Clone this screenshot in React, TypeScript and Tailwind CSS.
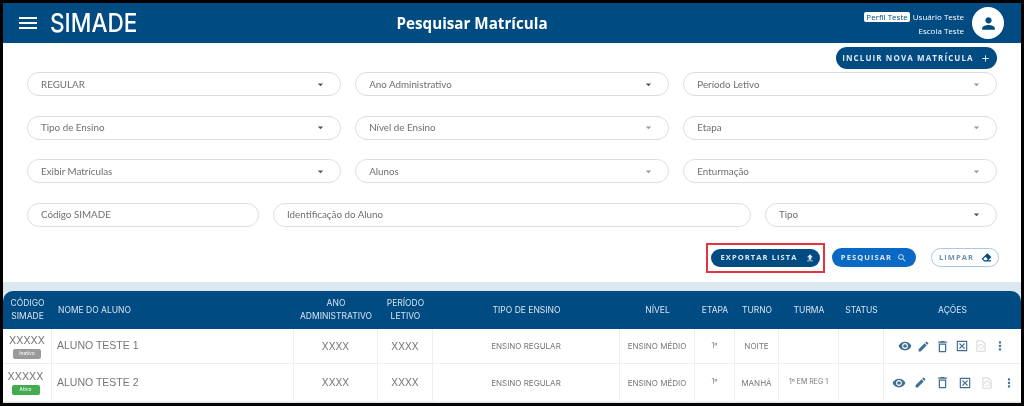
import { FaEraser } from "react-icons/fa"
import {
  MdAdd,
  MdArrowDropDown,
  MdEdit,
  MdFileUpload,
  MdMenu,
  MdMoreVert,
  MdOutlineDelete,
  MdOutlineDisabledByDefault,
  MdOutlineRestorePage,
  MdPerson,
  MdSearch,
  MdVisibility,
} from "react-icons/md"

const gridCols =
  "grid grid-cols-[49px_242px_84px_55px_187px_75px_40px_44px_60px_45px_137px]"

const Select = ({ label, dark, className = "" }: { label: string; dark?: boolean; className?: string }) => (
  <div className={`flex h-6 items-center justify-between rounded-full border border-[#dedede] pl-[13px] pr-[13px] ${className}`}>
    <span className="text-[9.8px] text-[#6f6f6f]">{label}</span>
    <MdArrowDropDown size={13} className={dark ? "text-[#555]" : "text-[#999]"} />
  </div>
)

const Input = ({ label, className = "" }: { label: string; className?: string }) => (
  <div className={`flex h-6 items-center rounded-full border border-[#dedede] px-[13px] ${className}`}>
    <span className="text-[9.8px] text-[#6f6f6f]">{label}</span>
  </div>
)

const headers = [
  "CÓDIGO SIMADE",
  "NOME DO ALUNO",
  "ANO ADMINISTRATIVO",
  "PERÍODO LETIVO",
  "TIPO DE ENSINO",
  "NÍVEL",
  "ETAPA",
  "TURNO",
  "TURMA",
  "STATUS",
  "AÇÕES",
]

const Cell = ({ children, className = "" }: { children?: React.ReactNode; className?: string }) => (
  <div className={`flex items-center justify-center border-r border-[#efefef] text-[#777] ${className}`}>
    {children}
  </div>
)

type Row = {
  name: string
  badge: string
  badgeColor: string
  turno: string
  turma: string
  gap: string
  height: string
  codeShift: string
}

const rows: Row[] = [
  { name: "ALUNO TESTE 1", badge: "Inativo", badgeColor: "bg-[#9a9a9a]", turno: "NOITE", turma: "", gap: "gap-[5px] pr-[1px]", height: "h-[35px]", codeShift: "" },
  { name: "ALUNO TESTE 2", badge: "Ativo", badgeColor: "bg-[#45ab4f]", turno: "MANHÃ", turma: "1º EM REG 1", gap: "gap-[8px] pl-[3px]", height: "h-[38px]", codeShift: "pr-[3px]" },
]

export default function App() {
  return (
    <div className="h-[406px] w-[1024px] overflow-hidden bg-black p-[3px] font-['Lato',sans-serif]">
      <div className="flex h-[400px] w-[1018px] flex-col bg-white blur-[0.6px]">
        {/* Header */}
        <header className="flex h-10 shrink-0 items-center bg-[#004b82] pl-[13px] pr-[17px] text-white">
          <MdMenu size={24} />
          <span className="ml-[10px] origin-left scale-x-[0.87] font-['Inter',sans-serif] text-[26px] font-medium leading-none">SIMADE</span>
          <h1 className="ml-[246px] font-['Open_Sans',sans-serif] text-[15.2px] font-bold">Pesquisar Matrícula</h1>
          <div className="ml-auto flex flex-col items-end gap-[5px] font-['Open_Sans',sans-serif] text-[8px] leading-none">
            <div className="flex items-center gap-[3px]">
              <span className="rounded-[2px] bg-white px-[2px] py-[1px] text-[#004b82]">Perfil Teste</span>
              <span>Usuário Teste</span>
            </div>
            <span>Escola Teste</span>
          </div>
          <div className="ml-2 flex size-8 items-center justify-center rounded-full bg-white text-[#004b82]">
            <MdPerson size={19} />
          </div>
        </header>

        {/* Filters */}
        <div className="flex justify-end pr-[24px] pt-[4px]">
          <button className="flex h-[22px] w-[161px] items-center justify-center gap-[6px] rounded-full bg-[#004b82] font-['Open_Sans',sans-serif] text-[8px] font-bold tracking-[1.1px] text-[#dfe9f1]">
            INCLUIR NOVA MATRÍCULA
            <MdAdd size={11} />
          </button>
        </div>
        <div className="mt-[3px] flex flex-col gap-[19.5px] pl-[24px] pr-[24px]">
          <div className="grid grid-cols-3 gap-[14.5px]">
            <Select label="REGULAR" dark />
            <Select label="Ano Administrativo" dark />
            <Select label="Período Letivo" />
          </div>
          <div className="grid grid-cols-3 gap-[14.5px]">
            <Select label="Tipo de Ensino" dark />
            <Select label="Nível de Ensino" />
            <Select label="Etapa" />
          </div>
          <div className="grid grid-cols-3 gap-[14.5px]">
            <Select label="Exibir Matrículas" dark />
            <Select label="Alunos" />
            <Select label="Enturmação" />
          </div>
          <div className="grid grid-cols-[232px_1fr_232px] gap-[14px]">
            <Input label="Código SIMADE" />
            <Input label="Identificação do Aluno" />
            <Select label="Tipo" dark />
          </div>
        </div>

        {/* Actions */}
        <div className="mt-[16px] flex items-center justify-end pr-[22px] font-['Open_Sans',sans-serif] text-[7.5px] font-bold tracking-[1.1px]">
          <div className="border-2 border-[#e8333c] px-[3px] py-[4px]">
            <button className="flex h-[18px] w-[109px] items-center justify-center gap-[7px] rounded-full bg-[#004b82] pl-[4px] text-[#dfe9f1]">
              EXPORTAR LISTA
              <MdFileUpload size={10} />
            </button>
          </div>
          <button className="ml-[7px] flex h-[19px] w-[84px] items-center justify-center gap-[5px] rounded-full bg-[#0a69c4] text-[#dfe9f1]">
            PESQUISAR
            <MdSearch size={10} />
          </button>
          <button className="ml-[15px] flex h-[19px] w-[68px] items-center justify-center gap-[8px] rounded-full border border-[#a9c6e4] text-[#6f8fb0]">
            LIMPAR
            <FaEraser size={9} className="text-[#004b82]" />
          </button>
        </div>

        {/* Table */}
        <div className="mt-[9.5px] flex-1 bg-[#dde7f0] pt-[9px]">
          <div className="overflow-hidden rounded-t-[10px]">
            <div className={`${gridCols} h-[38px] items-center bg-[#004b82] text-center font-['Inter',sans-serif] text-[8.5px] leading-[13px] text-[#d6e3ee]`}>
              {headers.map((h, i) => (
                <div key={h} className={i === 1 ? "pl-[6px] text-left" : ""}>
                  {h}
                </div>
              ))}
            </div>
          </div>
          <div className="bg-white">
            {rows.map((r) => (
              <div key={r.name} className={`${gridCols} ${r.height} border-b border-[#efefef] font-['Inter',sans-serif]`}>
                <Cell className={`flex-col gap-[2px] ${r.codeShift}`}>
                  <span className="text-[10.5px] leading-[13px]">XXXXX</span>
                  <span className={`${r.badgeColor} flex h-[10px] w-[28px] items-center justify-center rounded-[2px] text-[5px] text-white`}>
                    {r.badge}
                  </span>
                </Cell>
                <Cell className="justify-start pl-[5px] font-['Liberation_Sans',sans-serif] text-[10.5px]">{r.name}</Cell>
                <Cell className="text-[10px]">XXXX</Cell>
                <Cell className="text-[10px]">XXXX</Cell>
                <Cell className="text-[8px]">ENSINO REGULAR</Cell>
                <Cell className="text-[8px]">ENSINO MÉDIO</Cell>
                <Cell className="text-[7px]">1º</Cell>
                <Cell className="text-[8px]">{r.turno}</Cell>
                <Cell className="text-[7px]">{r.turma}</Cell>
                <Cell />
                <div className={`flex items-center justify-center ${r.gap} text-[#3d6f94]`}>
                  <MdVisibility size={14} />
                  <MdEdit size={13} />
                  <MdOutlineDelete size={15} />
                  <MdOutlineDisabledByDefault size={14} />
                  <MdOutlineRestorePage size={14} className="text-[#d8d8d8]" />
                  <MdMoreVert size={14} />
                </div>
              </div>
            ))}
          </div>
        </div>
      </div>
    </div>
  )
}
